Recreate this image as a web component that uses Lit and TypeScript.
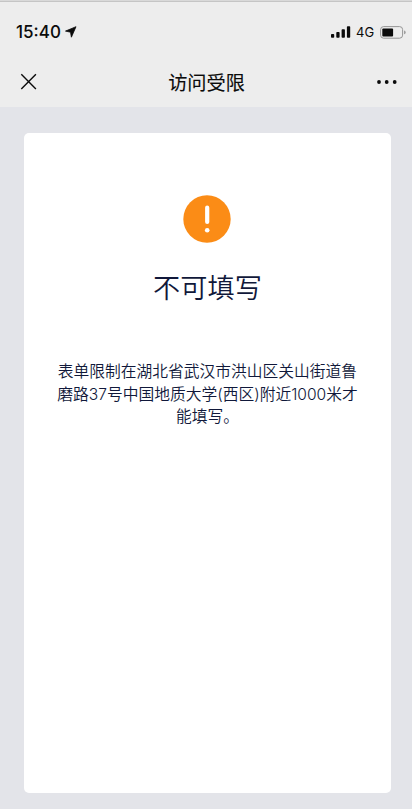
import { LitElement, html, css } from "lit";
import { customElement } from "lit/decorators.js";

@customElement("status-bar")
class StatusBar extends LitElement {
  static styles = css`
    :host {
      display: flex;
      align-items: center;
      justify-content: space-between;
      box-sizing: border-box;
      height: 55px;
      padding: 9px 6px 0 16px;
      color: #0b0b0b;
      font-family: Inter, "Liberation Sans", sans-serif;
    }
    svg { display: block; flex: none; }
    .left, .right { display: flex; align-items: center; }
    .time { font-size: 17px; line-height: 20px; font-weight: 500; width: 46px; white-space: nowrap; }
    .arrow { margin-left: 3px; }
    .network { font-size: 13px; line-height: 16px; width: 18px; margin: 0 6px 1px 5px; white-space: nowrap; }
  `;

  render() {
    return html`
      <div class="left">
        <span class="time">15:40</span>
        <svg class="arrow" width="12" height="12" viewBox="0 0 12 12">
          <path d="M11 .7.5 5.1l5 1.1.9 5Z" fill="#0b0b0b" stroke="#0b0b0b" stroke-width=".8" stroke-linejoin="round" />
        </svg>
      </div>
      <div class="right">
        <svg width="20" height="12" viewBox="0 0 20 12" fill="#0b0b0b">
          <rect x="0" y="8" width="3.2" height="3.7" rx=".8" />
          <rect x="5.3" y="6" width="3.3" height="5.7" rx=".8" />
          <rect x="10.6" y="3.2" width="3.3" height="8.5" rx=".8" />
          <rect x="15.9" y=".2" width="3.3" height="11.5" rx=".8" />
        </svg>
        <span class="network">4G</span>
        <svg width="26" height="13" viewBox="0 0 26 13">
          <rect x=".6" y=".6" width="22" height="11.6" rx="3" fill="none" stroke="#949494" />
          <rect x="2.3" y="2.4" width="10.8" height="8" rx="1" fill="#0b0b0b" />
          <path d="M24.1 4.6q1.5.3 1.5 1.8t-1.5 1.8Z" fill="#949494" />
        </svg>
      </div>
    `;
  }
}

@customElement("nav-bar")
class NavBar extends LitElement {
  static styles = css`
    :host {
      display: grid;
      grid-template-columns: 1fr auto 1fr;
      align-items: center;
      box-sizing: border-box;
      height: 52px;
      padding: 1px 15px 0 20px;
    }
    svg { display: block; }
    .title {
      margin: 0;
      color: #0b0b0b;
      font: 400 19.2px/26px "Noto Sans CJK SC", sans-serif;
      -webkit-text-stroke: 0.12px #0b0b0b;
      transform: translateX(-2px);
    }
    .more { justify-self: end; }
  `;

  render() {
    return html`
      <svg width="17" height="17" viewBox="0 0 17 17">
        <path d="m1.3 1.3 14.6 14.6m0-14.6L1.3 15.9" fill="none" stroke="#0b0b0b" stroke-width="1.4" />
      </svg>
      <h1 class="title">访问受限</h1>
      <svg class="more" width="20" height="4" viewBox="0 0 20 4" fill="#0b0b0b">
        <circle cx="2" cy="2" r="1.9" />
        <circle cx="9.7" cy="2" r="1.9" />
        <circle cx="17.7" cy="2" r="1.9" />
      </svg>
    `;
  }
}

@customElement("app-root")
class AppRoot extends LitElement {
  static styles = css`
    :host {
      display: flex;
      flex-direction: column;
      box-sizing: border-box;
      height: 809px;
      background: #e3e4e9;
    }
    .top { flex: none; height: 107px; background: linear-gradient(#d9d9d9 0 1px, #c5c5c5 1px 2px, #ededed 2px); }
    .content { flex: 1; box-sizing: border-box; padding: 26px 21px 16px 24px; display: flex; }
    .card {
      flex: 1;
      display: flex;
      flex-direction: column;
      align-items: center;
      background: #fff;
      border-radius: 5px;
      color: #10183a;
      font-family: Inter, "Noto Sans CJK SC", sans-serif;
      font-weight: 300;
    }
    .badge { display: block; flex: none; margin: 62px 2px 0 0; }
    .heading { margin: 26px 0 0; font-size: 27.2px; line-height: 40px; font-weight: 350; }
    .message { margin: 52px 0 0; font-size: 15.75px; line-height: 22.5px; font-weight: 350; text-align: center; white-space: nowrap; }
    .digits { font-size: 15.6px; font-weight: 300; }
  `;

  render() {
    return html`
      <header class="top">
        <status-bar></status-bar>
        <nav-bar></nav-bar>
      </header>
      <main class="content">
        <section class="card">
          <svg class="badge" width="48" height="48" viewBox="0 0 48 48">
            <circle cx="24" cy="24" r="23.7" fill="#fb8c16" />
            <path d="M24.2 12.7v14.2" stroke="#fff" stroke-width="4.2" stroke-linecap="round" />
            <circle cx="24.2" cy="35.2" r="2.3" fill="#fff" />
          </svg>
          <h2 class="heading">不可填写</h2>
          <p class="message">
            表单限制在湖北省武汉市洪山区关山街道鲁<br />磨路<span class="digits">37</span>号中国地质大学(西区)附近<span class="digits">1000</span>米才<br />能填写。
          </p>
        </section>
      </main>
    `;
  }
}
